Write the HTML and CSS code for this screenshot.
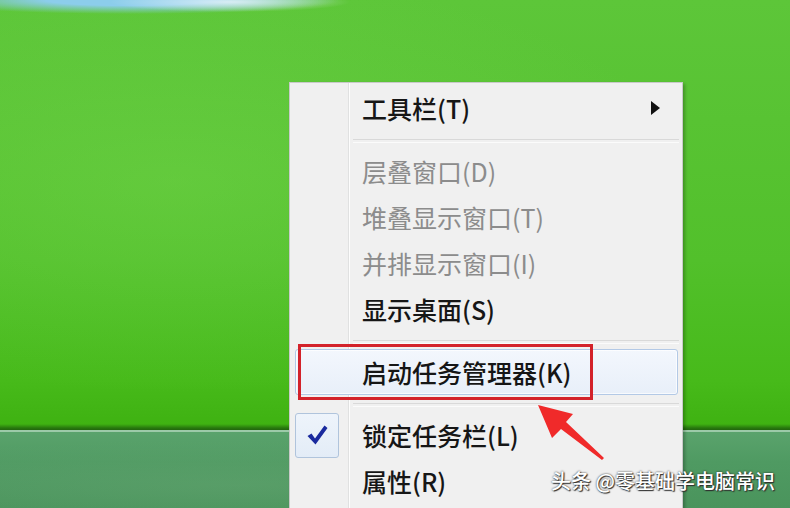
FILE: index.html
```html
<!DOCTYPE html>
<html lang="zh-CN">

<head>
    <meta charset="UTF-8" />
    <meta name="viewport" content="width=device-width, initial-scale=1.0" />
    <title>任务栏右键菜单</title>
    <link rel="stylesheet" href="styles.css">
</head>

<body>

    <!-- Desktop -->
    <div class="desktop">
        <div class="grass"></div>
        <div class="taskbar"></div>
    </div>

    <!-- Context menu -->
    <div class="menu">
        <div class="menu-item">
            <span class="menu-icon"></span>
            <span class="menu-label">工具栏(T)</span>
            <span class="submenu-arrow"></span>
        </div>
        <div class="menu-sep"></div>
        <div class="menu-item disabled">
            <span class="menu-icon"></span>
            <span class="menu-label">层叠窗口(D)</span>
        </div>
        <div class="menu-item disabled">
            <span class="menu-icon"></span>
            <span class="menu-label">堆叠显示窗口(T)</span>
        </div>
        <div class="menu-item disabled">
            <span class="menu-icon"></span>
            <span class="menu-label">并排显示窗口(I)</span>
        </div>
        <div class="menu-item">
            <span class="menu-icon"></span>
            <span class="menu-label">显示桌面(S)</span>
        </div>
        <div class="menu-sep"></div>
        <div class="menu-item hover">
            <span class="menu-icon"></span>
            <span class="menu-label">启动任务管理器(K)</span>
        </div>
        <div class="menu-sep"></div>
        <div class="menu-item">
            <span class="menu-icon checked">
                <svg width="22" height="20" viewBox="0 0 22 20">
                    <path d="M1.5 11 L5.5 8.5 L9 13.5 L18.5 0.5 L21.5 3 L9.5 19.5 Z" fill="#1a2a9e" />
                </svg>
            </span>
            <span class="menu-label">锁定任务栏(L)</span>
        </div>
        <div class="menu-item">
            <span class="menu-icon"></span>
            <span class="menu-label">属性(R)</span>
        </div>
    </div>

    <!-- Annotations -->
    <div class="mark-box"></div>
    <svg class="mark-arrow" width="80" height="64" viewBox="0 0 80 64">
        <polygon points="8,7 43,16 36,24 74,60 72,62 31,31 22,40" fill="#f02a2a" />
    </svg>

    <div class="watermark">头条 @零基础学电脑常识</div>

</body>

</html>
```

FILE: styles.css
```css
* {
    box-sizing: border-box;
    margin: 0;
    padding: 0;
}

body {
    width: 790px;
    height: 508px;
    overflow: hidden;
    font-family: "Noto Sans CJK SC", "Noto Sans", sans-serif;
    position: relative;
}

/* Desktop background */

.desktop {
    display: flex;
    flex-direction: column;
    height: 508px;
}

.grass {
    height: 430px;
    background:
        radial-gradient(ellipse 120px 10px at 230px 2px, rgba(225, 240, 248, 0.9), rgba(225, 240, 248, 0) 100%) no-repeat,
        radial-gradient(ellipse 210px 14px at 130px 0, rgba(140, 205, 235, 1) 40%, rgba(140, 205, 235, 0) 100%) no-repeat,
        linear-gradient(to bottom, rgba(0, 0, 0, 0) 0, rgba(0, 0, 0, 0) 424px, rgba(20, 70, 10, 0.55) 428px, rgba(20, 70, 10, 0.7) 430px),
        radial-gradient(ellipse at 22% 42%, rgba(125, 218, 85, 0.35), rgba(125, 218, 85, 0) 60%),
        linear-gradient(to bottom, #5dc639 0, #58c333 120px, #52c02b 260px, #47ba1a 380px, #3fb212 424px);
}

.taskbar {
    flex: 1;
    border-top: 2px solid #9ccaa8;
    background:
        radial-gradient(ellipse at 30% 70%, rgba(110, 170, 120, 0.35), rgba(110, 170, 120, 0) 60%),
        linear-gradient(to bottom, #5aa36c 0, #4f9a62 30px, #4a945c 76px);
}

/* Context menu */

.menu {
    position: absolute;
    left: 289px;
    top: 82px;
    width: 394px;
    height: 440px;
    padding: 2px 4px 2px 5px;
    background:
        linear-gradient(to right, transparent 58px, #e0e1e1 58px, #e0e1e1 59px, #fdfdfd 59px, #fdfdfd 60px, transparent 60px),
        #f0f0f0;
    border: 1px solid #c9c9c9;
    box-shadow: 2px 2px 3px rgba(0, 0, 0, 0.25);
}

.menu-item {
    display: flex;
    align-items: center;
    height: 46px;
    border: 1px solid transparent;
    border-radius: 3px;
    color: #161616;
    font-size: 25px;
    font-weight: 500;
}

.menu-item.disabled {
    color: #8c8c8c;
    font-weight: 400;
}

.menu-item.hover {
    border-color: #b3c9e6;
    background: linear-gradient(to bottom, #f3f7fd, #e8eff9);
    box-shadow: inset 0 0 0 1px rgba(255, 255, 255, 0.7);
}

.menu-icon {
    width: 44px;
    height: 45px;
    margin-left: -1px;
    display: flex;
    align-items: center;
    justify-content: center;
    flex-shrink: 0;
}

.menu-icon.checked {
    border: 1px solid #b0c4dc;
    border-radius: 3px;
    background: linear-gradient(to bottom, #eef4fb, #e3ecf7);
}

.menu-label {
    margin-left: 23px;
    line-height: 1;
}

.submenu-arrow {
    margin-left: auto;
    margin-right: 17px;
    width: 0;
    height: 0;
    border-top: 7px solid transparent;
    border-bottom: 7px solid transparent;
    border-left: 9px solid #111;
}

.menu-sep {
    height: 17px;
    margin-left: 58px;
    margin-right: -1px;
    padding-top: 8px;
}

.menu-sep::before {
    content: "";
    display: block;
    height: 2px;
    border-top: 1px solid #d9d9d9;
    border-bottom: 1px solid #fbfbfb;
}

/* Annotations */

.mark-box {
    position: absolute;
    left: 298px;
    top: 344px;
    width: 295px;
    height: 56px;
    border: 3px solid #d3222a;
}

.mark-arrow {
    position: absolute;
    left: 530px;
    top: 398px;
}

.watermark {
    position: absolute;
    left: 551px;
    top: 466px;
    font-size: 20px;
    font-weight: 500;
    color: #fff;
    text-shadow: 0 0 2px #222, 1px 1px 1px #333;
}
```
